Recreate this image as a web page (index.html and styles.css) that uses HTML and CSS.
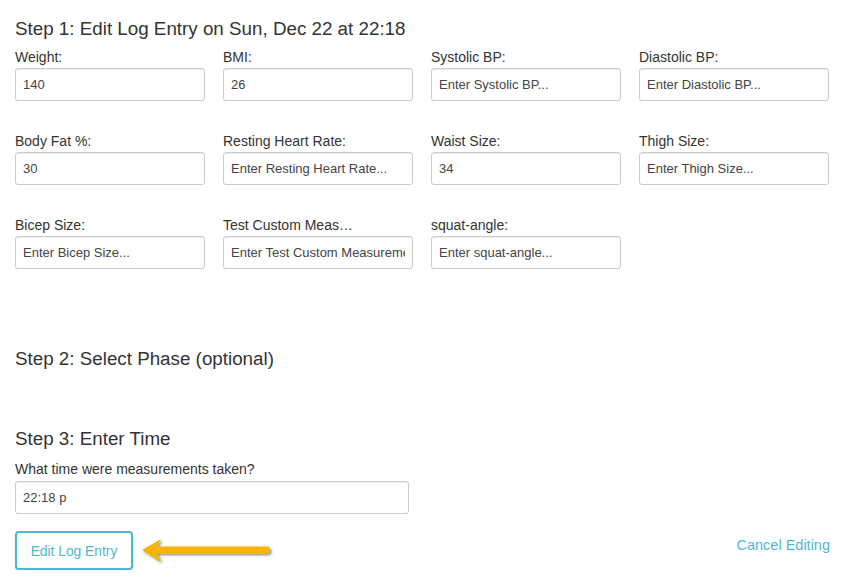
FILE: index.html
```html
<!DOCTYPE html>
<html>
<head>
<meta charset="utf-8">
<link rel="stylesheet" href="styles.css">
</head>
<body>
<div class="page">
  <h2 class="step step1">Step 1: Edit Log Entry on Sun, Dec 22 at 22:18</h2>
  <div class="grid">
    <div class="field"><label>Weight:</label><input class="ctl" value="140"></div>
    <div class="field"><label>BMI:</label><input class="ctl" value="26"></div>
    <div class="field"><label>Systolic BP:</label><input class="ctl" placeholder="Enter Systolic BP..."></div>
    <div class="field"><label>Diastolic BP:</label><input class="ctl" placeholder="Enter Diastolic BP..."></div>
    <div class="field"><label>Body Fat %:</label><input class="ctl" value="30"></div>
    <div class="field"><label>Resting Heart Rate:</label><input class="ctl" placeholder="Enter Resting Heart Rate..."></div>
    <div class="field"><label>Waist Size:</label><input class="ctl" value="34"></div>
    <div class="field"><label>Thigh Size:</label><input class="ctl" placeholder="Enter Thigh Size..."></div>
    <div class="field"><label>Bicep Size:</label><input class="ctl" placeholder="Enter Bicep Size..."></div>
    <div class="field"><label>Test Custom Meas…</label><input class="ctl" placeholder="Enter Test Custom Measurement..."></div>
    <div class="field"><label>squat-angle:</label><input class="ctl" placeholder="Enter squat-angle..."></div>
  </div>
  <h2 class="step step2">Step 2: Select Phase (optional)</h2>
  <h2 class="step step3">Step 3: Enter Time</h2>
  <div class="timefield"><label>What time were measurements taken?</label><input class="ctl" value="22:18 p"></div>
  <div class="actions">
    <div class="left">
      <button class="btn">Edit Log Entry</button>
      <svg class="arrow" width="136" height="30" viewBox="0 0 136 30">
        <defs>
          <filter id="sh" x="-10%" y="-40%" width="130%" height="180%">
            <feDropShadow dx="1.5" dy="1.5" stdDeviation="1" flood-color="#000" flood-opacity="0.5"/>
          </filter>
        </defs>
        <g filter="url(#sh)">
          <path d="M1 12 L20 1 L16 8.5 L127 8.5 Q131 12 127 15.5 L16 15.5 L20 24 Z" fill="#f8b500"/>
        </g>
      </svg>
    </div>
    <a class="cancel">Cancel Editing</a>
  </div>
</div>
</body>
</html>
```
FILE: styles.css
```css
html, body { margin: 0; padding: 0; background: #fff; }
body { font-family: "Liberation Sans", Arial, Helvetica, sans-serif; color: #333; }
.page { padding: 0 20px 0 15px; }
.step { font-weight: normal; font-size: 18.8px; color: #333; margin: 0; line-height: 24px; }
.step1 { padding-top: 17px; }
.grid { display: grid; grid-template-columns: repeat(4, 190px); column-gap: 18px; row-gap: 32px; margin-top: 8px; }
.field label, .timefield label { display: block; font-size: 14px; line-height: 17px; margin-bottom: 2px; color: #333; }
.ctl { box-sizing: border-box; width: 100%; height: 33px; border: 1px solid #ccc; border-radius: 3px; box-shadow: inset 0 1px 1px rgba(0,0,0,0.075); padding: 0 7px; font-family: "Liberation Sans", Arial, sans-serif; font-size: 13px; color: #444; background: #fff; outline: none; }
.ctl::placeholder { color: #444; opacity: 1; }
.step2 { margin-top: 78px; }
.step3 { margin-top: 56px; }
.timefield { width: 394px; margin-top: 10px; }
.timefield label { margin-bottom: 3px; }
.actions { display: flex; justify-content: space-between; align-items: flex-start; margin-top: 17px; }
.left { display: flex; align-items: center; gap: 8px; }
.btn { box-sizing: border-box; width: 118px; height: 39px; border: 2px solid #4cb9d0; border-radius: 4px; background: #fff; color: #4fb8d4; font-family: "Liberation Sans", Arial, sans-serif; font-size: 13.8px; padding: 2px 0 0; box-shadow: 0 1px 2px rgba(0,0,0,0.15); }
.arrow { display: block; margin-top: 4px; }
.cancel { color: #4fb8d4; font-size: 14.5px; margin-top: 6px; }
```
